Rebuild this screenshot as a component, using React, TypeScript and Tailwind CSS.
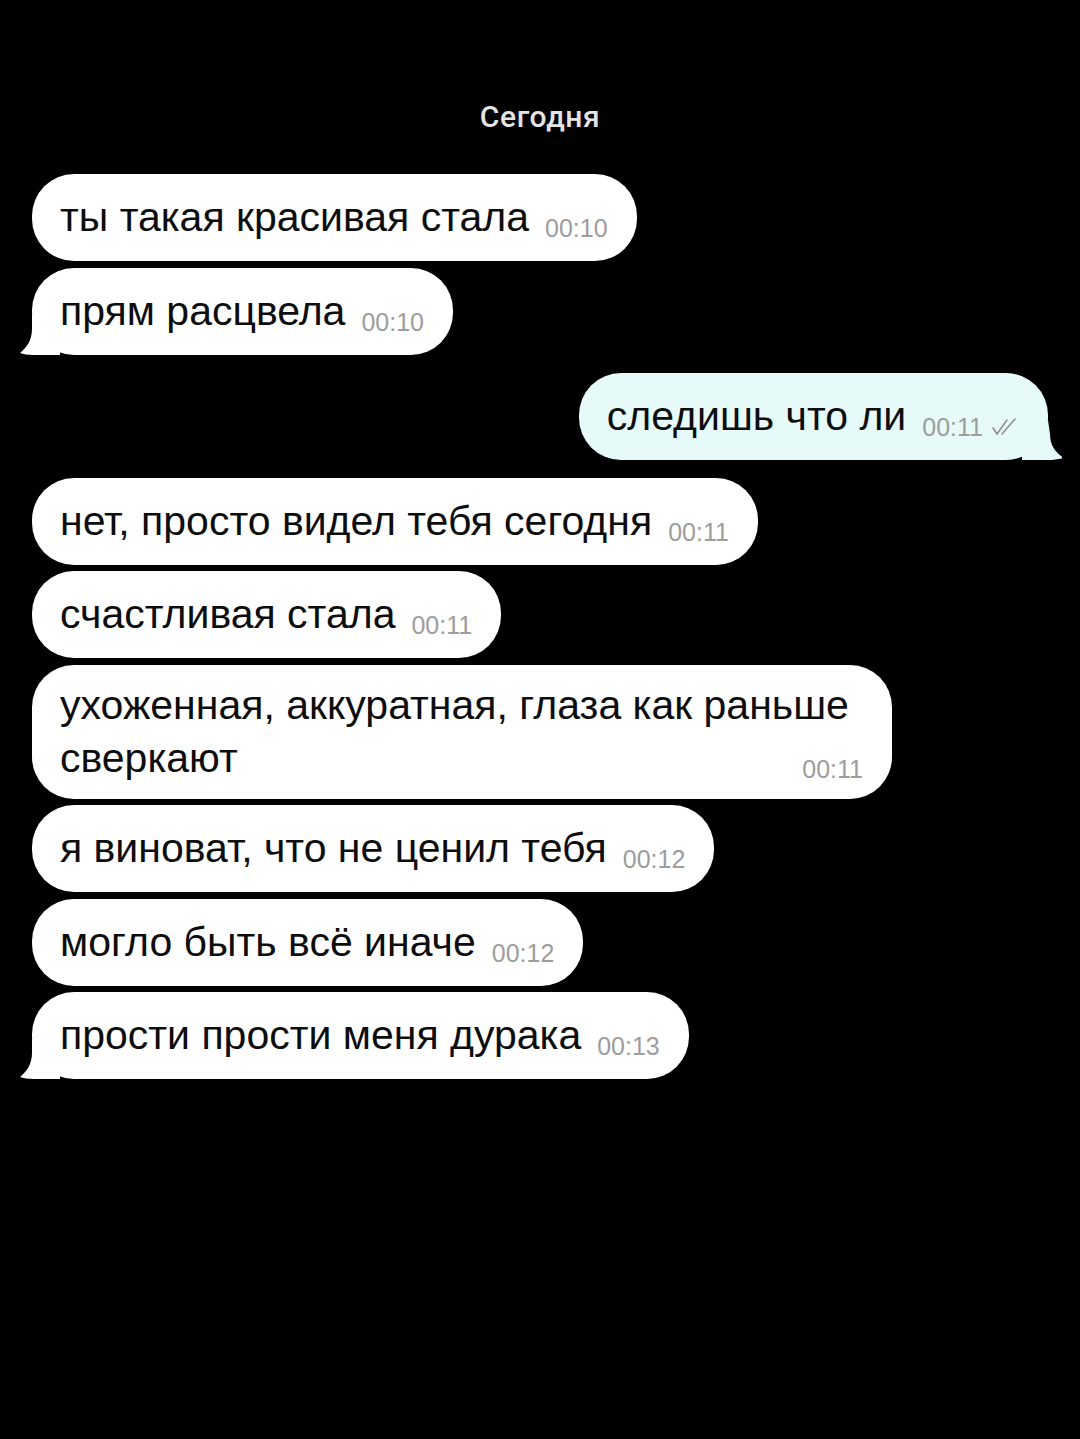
import React from "react";

type Msg = { text: string; time: string; out?: boolean; tail?: boolean; multi?: boolean };

const groups: Msg[][] = [
  [
    { text: "ты такая красивая стала", time: "00:10" },
    { text: "прям расцвела", time: "00:10", tail: true },
  ],
  [{ text: "следишь что ли", time: "00:11", out: true, tail: true }],
  [
    { text: "нет, просто видел тебя сегодня", time: "00:11" },
    { text: "счастливая стала", time: "00:11" },
    { text: "ухоженная, аккуратная, глаза как раньше сверкают", time: "00:11", multi: true },
    { text: "я виноват, что не ценил тебя", time: "00:12" },
    { text: "могло быть всё иначе", time: "00:12" },
    { text: "прости прости меня дурака", time: "00:13", tail: true },
  ],
];

const DoubleCheck = () => (
  <svg width="28" height="20" viewBox="0 0 28 20" fill="none" stroke="#8f8f8f" strokeWidth="1.6" strokeLinecap="round">
    <path d="M2 11 L6 17 L16 3" />
    <path d="M11 17 L24 2" />
  </svg>
);

const Bubble = ({ text, time, out, tail, multi }: Msg) => {
  const bg = out ? "#e6fafa" : "#ffffff";
  return (
    <div className={`flex ${out ? "justify-end" : "justify-start"}`}>
      <div
        className={`relative inline-block max-w-[860px] rounded-[42px] pl-7 pr-[29px] ${multi ? "py-[14px]" : "py-[17px]"} text-[41px] leading-[53px] text-[#0d0d0d]`}
        style={{ backgroundColor: bg }}
      >
        {tail && !out && (
          <svg className="absolute -left-3 bottom-0" width="40" height="40" viewBox="0 0 40 40">
            <path d="M12 0 H40 V40 H14 C8 40 3 39 0 38 C6 33 12 26 12 14 Z" fill={bg} />
          </svg>
        )}
        {tail && out && (
          <svg className="absolute -right-3.5 bottom-0" width="40" height="40" viewBox="0 0 40 40">
            <path d="M26 0 H0 V40 H26 C32 40 37 39 42 38 C34 33 28 26 28 14 Z" fill={bg} />
          </svg>
        )}
        {text}
        <span className="relative top-[11px] float-right ml-4 flex h-[53px] items-center gap-2 text-[25px] text-[#9d9d9d]">
          {time}
          {out && <DoubleCheck />}
        </span>
      </div>
    </div>
  );
};

export default function App() {
  return (
    <div className="min-h-[1439px] w-[1080px] bg-black px-8 pt-[100px] font-['Liberation_Sans',Arial,sans-serif]">
      <div className="mb-[40px] text-center font-['Roboto',sans-serif] text-[30px] font-medium leading-[34px] tracking-[0.6px] text-[#e4e4e4]">
        Сегодня
      </div>
      <div className="flex flex-col gap-[18px]">
        {groups.map((g, i) => (
          <div key={i} className="flex flex-col gap-[6.5px]">
            {g.map((m, j) => (
              <Bubble key={j} {...m} />
            ))}
          </div>
        ))}
      </div>
    </div>
  );
}
